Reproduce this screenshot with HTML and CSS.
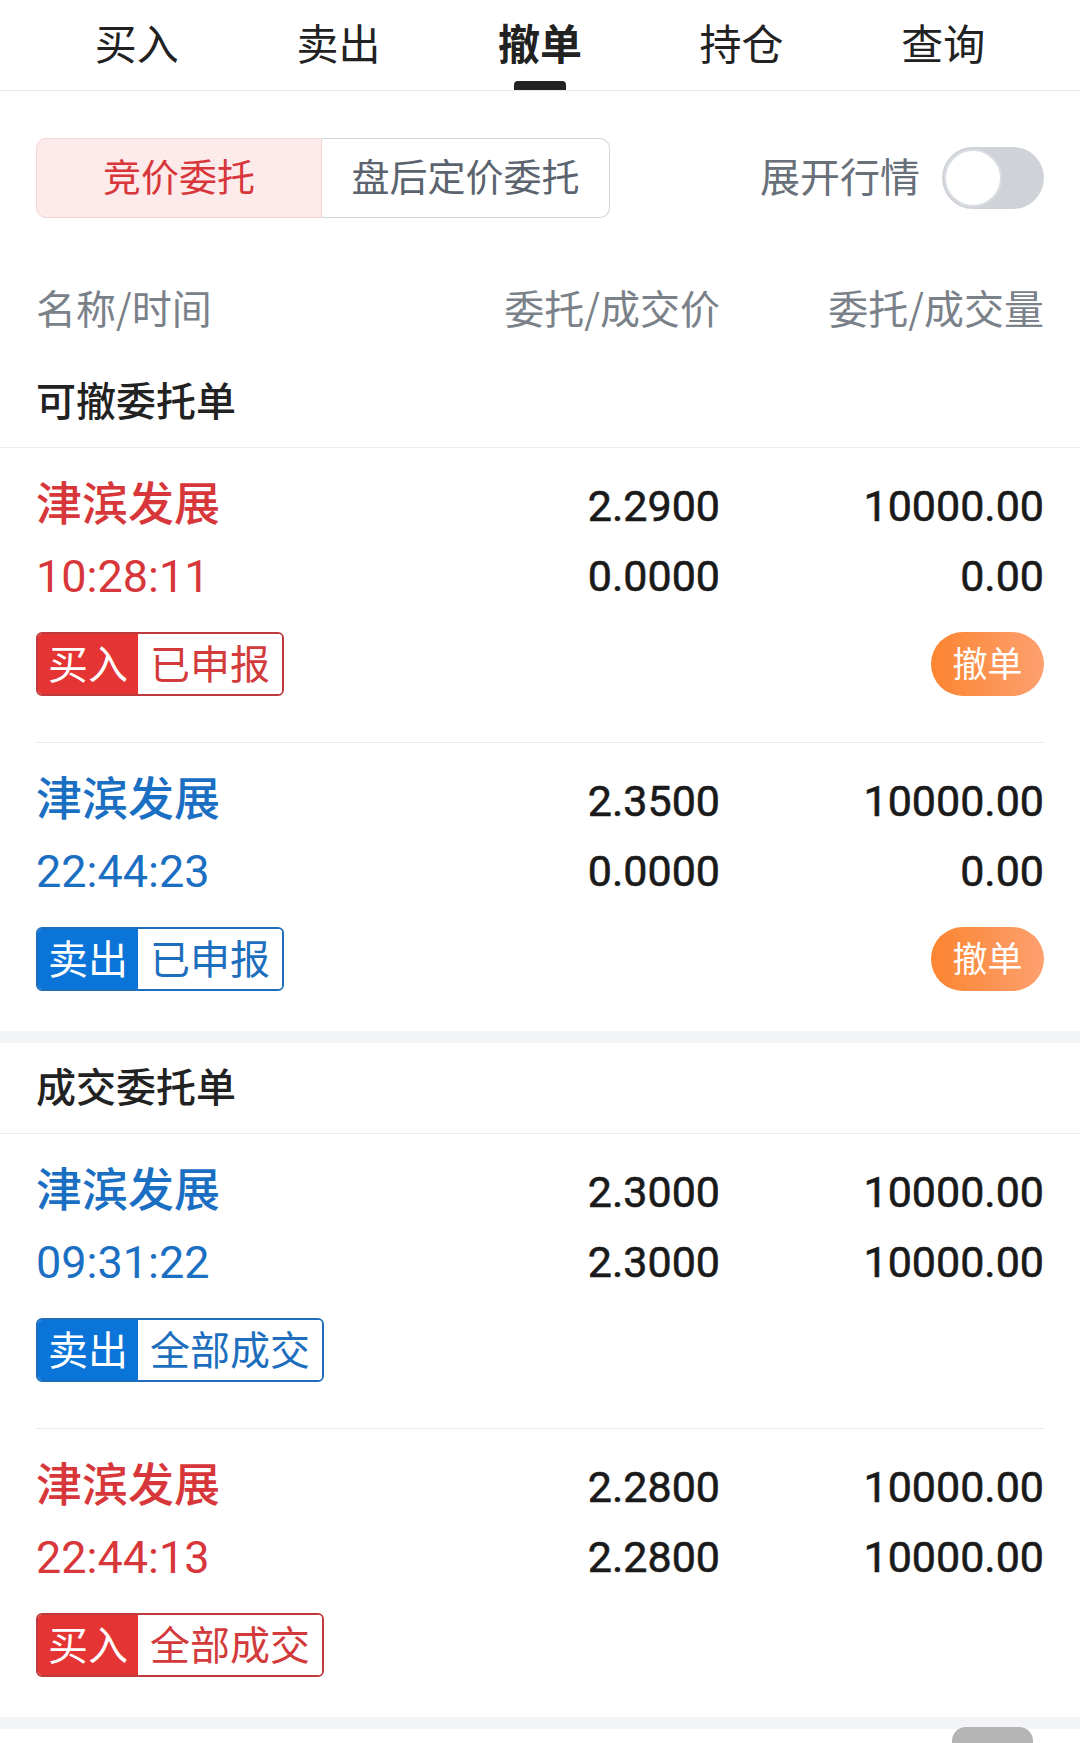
FILE: index.html
```html
<!DOCTYPE html>
<html lang="zh-CN">
<head>
<meta charset="utf-8">
<title>撤单</title>
<link rel="stylesheet" href="styles.css">
</head>
<body>
<nav class="tabs">
  <div class="tab">买入</div>
  <div class="tab">卖出</div>
  <div class="tab active">撤单</div>
  <div class="tab">持仓</div>
  <div class="tab">查询</div>
</nav>

<div class="toolbar">
  <div class="seg">
    <div class="seg-item on">竞价委托</div>
    <div class="seg-item">盘后定价委托</div>
  </div>
  <div class="expand">
    <span class="expand-label">展开行情</span>
    <span class="switch"><span class="knob"></span></span>
  </div>
</div>

<div class="cols">
  <span>名称/时间</span>
  <span class="r">委托/成交价</span>
  <span class="r">委托/成交量</span>
</div>

<section class="sec">
  <div class="sec-title">可撤委托单</div>
  <div class="order buy">
    <div class="grid">
      <span class="name">津滨发展</span><span class="num">2.2900</span><span class="num">10000.00</span>
      <span class="time">10:28:11</span><span class="num low">0.0000</span><span class="num low">0.00</span>
    </div>
    <div class="foot">
      <span class="tag"><span class="tag-dir">买入</span><span class="tag-st">已申报</span></span>
      <span class="cancel">撤单</span>
    </div>
  </div>
  <div class="order sell">
    <div class="grid">
      <span class="name">津滨发展</span><span class="num">2.3500</span><span class="num">10000.00</span>
      <span class="time">22:44:23</span><span class="num low">0.0000</span><span class="num low">0.00</span>
    </div>
    <div class="foot">
      <span class="tag"><span class="tag-dir">卖出</span><span class="tag-st">已申报</span></span>
      <span class="cancel">撤单</span>
    </div>
  </div>
</section>
<div class="band"></div>

<section class="sec">
  <div class="sec-title">成交委托单</div>
  <div class="order sell">
    <div class="grid">
      <span class="name">津滨发展</span><span class="num">2.3000</span><span class="num">10000.00</span>
      <span class="time">09:31:22</span><span class="num low">2.3000</span><span class="num low">10000.00</span>
    </div>
    <div class="foot">
      <span class="tag"><span class="tag-dir">卖出</span><span class="tag-st">全部成交</span></span>
    </div>
  </div>
  <div class="order buy">
    <div class="grid">
      <span class="name">津滨发展</span><span class="num">2.2800</span><span class="num">10000.00</span>
      <span class="time">22:44:13</span><span class="num low">2.2800</span><span class="num low">10000.00</span>
    </div>
    <div class="foot">
      <span class="tag"><span class="tag-dir">买入</span><span class="tag-st">全部成交</span></span>
    </div>
  </div>
</section>
<div class="band"></div>

<div class="float-btn"></div>
</body>
</html>
```

FILE: styles.css
```css
* { box-sizing: border-box; }
html, body { margin: 0; padding: 0; background: #fff; }
body {
  font-family: "Noto Sans CJK SC", "Noto Sans", sans-serif;
  color: #222;
  width: 1080px;
  height: 1743px;
  overflow: hidden;
}

/* tabs */
.tabs {
  display: flex;
  padding: 0 36px;
  height: 91px;
  border-bottom: 1px solid #e8e8e8;
}
.tab {
  flex: 1;
  position: relative;
  text-align: center;
  font-size: 42px;
  line-height: 83px;
  color: #222;
}
.tab.active { font-weight: 700; }
.tab.active::after {
  content: "";
  position: absolute;
  left: 50%;
  top: 81px;
  width: 52px;
  height: 9px;
  margin-left: -26px;
  background: #222;
  border-radius: 4px 4px 0 0;
}

/* toolbar */
.toolbar {
  display: flex;
  justify-content: space-between;
  align-items: center;
  padding: 47px 36px 0;
}
.seg {
  display: flex;
  height: 80px;
}
.seg-item {
  display: flex;
  align-items: center;
  justify-content: center;
  padding-bottom: 8px;
  font-size: 38px;
  color: #5b636e;
  border: 1px solid #d0d3d8;
  background: #fff;
}
.seg-item:first-child {
  width: 286px;
  border-radius: 10px 0 0 10px;
}
.seg-item:last-child {
  width: 288px;
  border-left: none;
  border-radius: 0 10px 10px 0;
}
.seg-item.on {
  background: #fdeaea;
  border-color: #f1d3d3;
  color: #d7373a;
}
.expand {
  display: flex;
  align-items: center;
  gap: 22px;
}
.expand-label {
  padding-bottom: 6px;
  font-size: 40px;
  color: #68707a;
}
.switch {
  display: flex;
  align-items: center;
  width: 102px;
  height: 62px;
  padding: 2px;
  border-radius: 31px;
  background: #cfd2d7;
}
.knob {
  width: 58px;
  height: 58px;
  border-radius: 50%;
  background: #fff;
  border: 2px solid #dadde2;
}

/* column header */
.cols {
  display: grid;
  grid-template-columns: 1fr 250px 324px;
  padding: 0 36px;
  margin: 68px 0 29px;
  font-size: 40px;
  line-height: 42px;
  color: #7a8189;
}
.r { text-align: right; }

/* sections */
.sec-title {
  padding: 20px 36px 26px;
  font-size: 40px;
  line-height: 44px;
  font-weight: 500;
  color: #222;
  border-bottom: 1px solid #ececec;
}
.band {
  height: 12px;
  background: #f3f4f7;
}

/* orders */
.order {
  margin: 0 36px;
  padding: 18px 0 46px;
  border-bottom: 1px solid #e9e9e9;
}
.order:last-child {
  border-bottom: none;
  padding-bottom: 40px;
}
.grid {
  display: grid;
  grid-template-columns: 1fr 250px 324px;
  grid-auto-rows: 72px;
  align-items: center;
}
.name {
  padding-bottom: 4px;
  font-size: 46px;
  font-weight: 500;
}
.time {
  padding-top: 4px;
  font-family: Roboto, "Noto Sans", sans-serif;
  font-size: 45px;
}
.num {
  padding-top: 8px;
  font-family: Roboto, "Noto Sans", sans-serif;
  font-size: 43px;
  font-weight: 400;
  text-align: right;
  color: #1a1a1a;
  -webkit-text-stroke: 0.6px #1a1a1a;
}
.num.low { padding-top: 4px; }
.buy .name, .buy .time { color: #d7373a; }
.sell .name, .sell .time { color: #1b6fc2; }

.foot {
  display: flex;
  justify-content: space-between;
  align-items: center;
  margin-top: 22px;
  height: 64px;
}
.tag {
  display: flex;
  height: 64px;
  border: 2px solid;
  border-radius: 6px;
  overflow: hidden;
  font-size: 40px;
  line-height: 56px;
}
.tag-dir {
  padding: 0 10px 4px;
  color: #fff;
}
.tag-st {
  padding: 0 12px 4px;
  background: #fff;
}
.buy .tag { border-color: #bf3a3d; }
.buy .tag-dir { background: #e53434; }
.buy .tag-st { color: #d23a3c; }
.sell .tag { border-color: #1d6fbe; }
.sell .tag-dir { background: #0a74d8; }
.sell .tag-st { color: #1d6fbe; }

.cancel {
  display: flex;
  align-items: center;
  justify-content: center;
  width: 113px;
  height: 64px;
  padding-bottom: 6px;
  border-radius: 32px;
  background: linear-gradient(to right, #fb8530, #fda070);
  color: #fff;
  font-size: 35px;
}

.float-btn {
  position: fixed;
  right: 47px;
  bottom: -24px;
  width: 81px;
  height: 40px;
  background: #b4b4b4;
  border-radius: 14px 14px 0 0;
}
```
